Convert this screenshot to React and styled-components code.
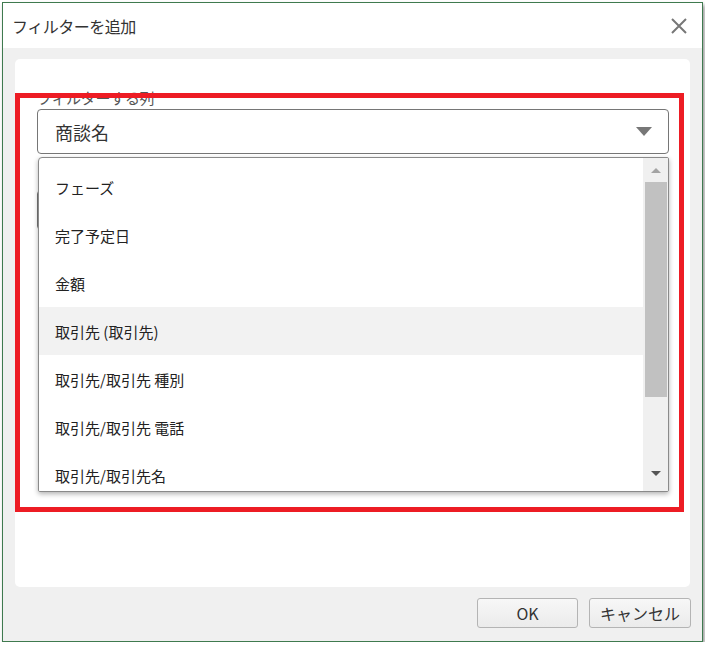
import React from 'react';
import styled, { createGlobalStyle } from 'styled-components';

const GlobalStyle = createGlobalStyle`
    html, body {
        margin: 0;
        padding: 0;
        background: #ffffff;
    }
    body {
        font-family: "Noto Sans CJK JP", "Noto Sans", sans-serif;
        color: #333333;
    }
    * {
        box-sizing: border-box;
    }
`

const Dialog = styled.div`
    position: relative;
    margin: 2px 0 0 2px;
    width: 701px;
    height: 640px;
    border: 1px solid #3f7a4f;
    background: #f0f0f0;
    box-shadow: 2px 3px 4px rgba(0, 0, 0, 0.4);
    display: flex;
    flex-direction: column;
`

const TitleBar = styled.div`
    height: 45px;
    flex-shrink: 0;
    background: #ffffff;
    display: flex;
    align-items: center;
    justify-content: space-between;
    padding: 0 14px 0 9px;
`

const Title = styled.span`
    font-size: 16px;
    color: #333333;
    letter-spacing: -0.5px;
`

const Close = styled.button`
    width: 18px;
    height: 18px;
    padding: 0;
    border: none;
    background: transparent;
    display: flex;
    align-items: center;
    justify-content: center;
`

const Body = styled.div`
    padding: 11px 12px 0 12px;
    display: flex;
    flex-direction: column;
`

const Panel = styled.div`
    height: 528px;
    background: #ffffff;
    border-radius: 5px;
    padding: 27px 21px 0 22px;
    display: flex;
    flex-direction: column;
`

const Field = styled.div`
    position: relative;
    display: flex;
    flex-direction: column;
    margin-bottom: ${props => props.gap || 0}px;
`

const Label = styled.label`
    min-height: 23px;
    font-size: 15px;
    line-height: 23px;
    color: #555555;
    letter-spacing: -0.3px;
`

const Select = styled.div`
    height: ${props => props.h}px;
    border: 1px solid #767676;
    border-radius: 4px;
    background: #ffffff;
    display: flex;
    align-items: center;
    justify-content: space-between;
    padding: 0 16px 0 17px;
    font-size: 18px;
    color: #333333;
`

const Arrow = styled.span`
    width: 0;
    height: 0;
    border-left: 8px solid transparent;
    border-right: 8px solid transparent;
    border-top: 9px solid #777777;
`

const Dropdown = styled.div`
    position: absolute;
    top: 71px;
    left: 1px;
    width: 631px;
    height: 335px;
    background: #ffffff;
    border: 1px solid #8a8a8a;
    border-radius: 4px 2px 2px 2px;
    box-shadow: 0 2px 5px rgba(0, 0, 0, 0.3);
    display: flex;
    overflow: hidden;
    z-index: 2;
`

const List = styled.ul`
    flex: 1;
    margin: 0;
    padding: 5px 0 0 0;
    list-style: none;
    overflow: hidden;
`

const Item = styled.li`
    height: 48px;
    flex-shrink: 0;
    display: flex;
    align-items: center;
    padding-left: 16px;
    font-size: 15px;
    color: #222222;
    background: ${props => props.active ? '#f2f2f2' : '#ffffff'};
`

const ScrollBar = styled.div`
    width: 25px;
    background: #f0f0f0;
    display: flex;
    flex-direction: column;
    align-items: center;
    padding: 0 1px 0 2px;
`

const ScrollArrow = styled.div`
    height: ${props => props.h}px;
    width: 100%;
    display: flex;
    align-items: ${props => props.down ? 'flex-start' : 'center'};
    justify-content: center;
    padding-top: ${props => props.down ? 13 : 0}px;

    &::before {
        content: '';
        width: 0;
        height: 0;
        border-left: 5px solid transparent;
        border-right: 5px solid transparent;
        ${props => props.down
            ? 'border-top: 5px solid #555555;'
            : 'border-bottom: 5px solid #a3a3a3;'}
    }
`

const Thumb = styled.div`
    width: 100%;
    height: 215px;
    background: #c1c1c1;
`

const Footer = styled.div`
    display: flex;
    justify-content: flex-end;
    gap: 11px;
    padding: 11px 11px 0 0;
`

const Button = styled.button`
    width: ${props => props.w}px;
    height: 30px;
    border: 1px solid #b4b4b4;
    border-radius: 3px;
    background: linear-gradient(#f7f7f7, #ebebeb);
    font-family: "Noto Sans CJK JP", "Noto Sans", sans-serif;
    font-size: 16px;
    color: #333333;
    padding: 0;
`

const Annotation = styled.div`
    position: absolute;
    left: 12px;
    top: 90px;
    width: 669px;
    height: 419px;
    border: 5px solid #ed1c24;
    pointer-events: none;
    z-index: 3;
`

const options = [
    'フェーズ',
    '完了予定日',
    '金額',
    '取引先 (取引先)',
    '取引先/取引先 種別',
    '取引先/取引先 電話',
    '取引先/取引先名',
]

const App = () => {
    return (
        <>
            <GlobalStyle />
            <Dialog>
                <TitleBar>
                    <Title>フィルターを追加</Title>
                    <Close aria-label="閉じる">
                        <svg width="16" height="16" viewBox="0 0 16 16">
                            <path d="M1 1 L15 15 M15 1 L1 15" stroke="#777777" strokeWidth="2" />
                        </svg>
                    </Close>
                </TitleBar>
                <Body>
                    <Panel>
                        <Field gap={13}>
                            <Label>フィルターする列</Label>
                            <Select h={45}>
                                <span>商談名</span>
                                <Arrow />
                            </Select>
                            <Dropdown>
                                <List>
                                    {options.map((o, i) => (
                                        <Item key={o} active={i === 3}>{o}</Item>
                                    ))}
                                </List>
                                <ScrollBar>
                                    <ScrollArrow h={24} />
                                    <Thumb />
                                    <div style={{ flex: 1 }} />
                                    <ScrollArrow h={33} down />
                                </ScrollBar>
                            </Dropdown>
                        </Field>
                        <Field>
                            <Label />
                            <Select h={40} />
                        </Field>
                    </Panel>
                </Body>
                <Footer>
                    <Button w={101}>OK</Button>
                    <Button w={102}>キャンセル</Button>
                </Footer>
                <Annotation />
            </Dialog>
        </>
    );
};

export default App;
